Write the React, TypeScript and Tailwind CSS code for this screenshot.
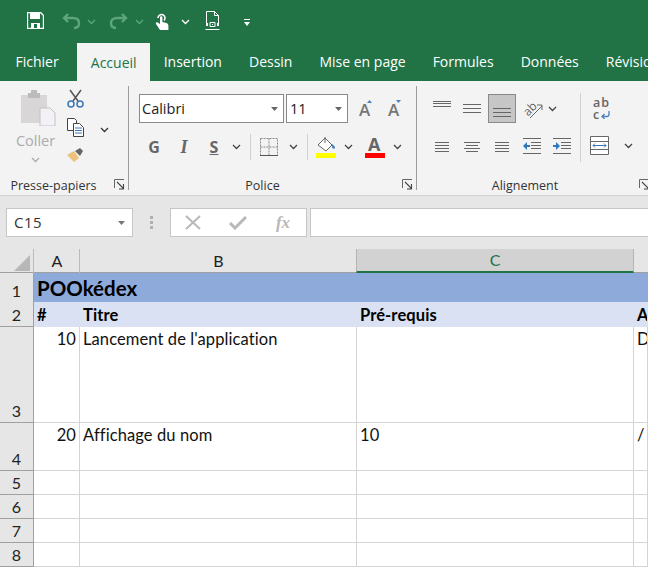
import type { ReactNode } from "react";

const TABS = ["Fichier", "Accueil", "Insertion", "Dessin", "Mise en page", "Formules", "Données", "Révision"];

function Chevron({ color = "#444", className = "" }: { color?: string; className?: string }) {
  return (
    <svg width="9" height="6" viewBox="0 0 9 6" className={className}>
      <path d="M1 1l3.5 3.5L8 1" fill="none" stroke={color} strokeWidth="1.3" />
    </svg>
  );
}

function Launcher() {
  return (
    <svg width="11" height="11" viewBox="0 0 11 11">
      <path d="M.5 9V.5H10" fill="none" stroke="#666" />
      <path d="M3 3l6 6M9.5 5v5H5" fill="none" stroke="#444" strokeWidth="1.1" />
    </svg>
  );
}

function Slot({ w, children, className = "" }: { w: string; children?: ReactNode; className?: string }) {
  return <div className={`flex items-center justify-center shrink-0 ${w} ${className}`}>{children}</div>;
}

function Lines({ rows, w = 18 }: { rows: [number, number][]; w?: number }) {
  // rows are [inset, y] pairs, drawn as grey text lines
  return (
    <svg width={w} height="18" viewBox={`0 0 ${w} 18`}>
      {rows.map(([inset, y]) => (
        <path key={y} d={`M${inset} ${y + 0.5}H${w - inset}`} stroke="#666" />
      ))}
    </svg>
  );
}

function QuickAccess() {
  return (
    <div className="flex items-center h-[43px] pl-[27px]">
      <svg width="17" height="17" viewBox="0 0 17 17" className="mb-[3px]">
        <path d="M.5.5h13l3 3v13H.5z" fill="none" stroke="#fff" strokeWidth="1.4" />
        <path d="M3 1h10v6H3zM4 11h9v5H4z" fill="#fff" />
        <path d="M7 12h3v4H7z" fill="#217346" />
      </svg>
      <svg width="19" height="17" viewBox="0 0 19 17" className="ml-[18px] mb-[1px]">
        <path d="M6 1L2 5l4 4M2 5h9c4 0 6 2 6 5s-2 5-5 5" fill="none" stroke="#5da57c" strokeWidth="2.4" />
      </svg>
      <Chevron color="#5da57c" className="ml-[6px]" />
      <svg width="19" height="17" viewBox="0 0 19 17" className="ml-[13px] mb-[1px]">
        <path d="M13 1l4 4-4 4M17 5H8c-4 0-6 2-6 5s2 5 5 5" fill="none" stroke="#5da57c" strokeWidth="2.4" />
      </svg>
      <Chevron color="#5da57c" className="ml-[7px]" />
      <svg width="14" height="18" viewBox="0 0 14 18" className="ml-[11px]">
        <path d="M3 5a3.5 3.5 0 1 1 6 2.5" fill="none" stroke="#fff" strokeWidth="1.6" />
        <path d="M5 4.5c0-1.600 2.400-1.600 2.400 0V9l4 1c1.500.5 2 1.500 2 3v4H5L1 11c-.7-1.300.8-2.300 2-1.300L5 11z" fill="#fff" />
      </svg>
      <Chevron color="#fff" className="ml-[12px]" />
      <svg width="15" height="19" viewBox="0 0 15 19" className="ml-[15px] mb-[2px]">
        <path d="M1.500 13V.5h8l4 4V13M9.500.5v4h4M.5 18.500h14" fill="none" stroke="#fff" />
        <path d="M5 11.500h5v4H5z" fill="none" stroke="#fff" />
        <path d="M1 12h2v3H1zM12 12h2v3h-2zM7 13h1v1H7z" fill="#fff" />
      </svg>
      <svg width="8" height="8" viewBox="0 0 8 8" className="ml-[23px] mt-[3px]">
        <path d="M1 .5h6" stroke="#fff" />
        <path d="M1 3h6L4 7z" fill="#fff" />
      </svg>
    </div>
  );
}

function TabBar() {
  return (
    <div className="flex h-[38px] pl-[2px] pb-[1px] text-[14px] text-white overflow-hidden">
      {TABS.map((t) => (
        <div
          key={t}
          className={`flex items-center justify-center px-[13.5px] shrink-0 whitespace-nowrap ${
            t === "Accueil" ? "bg-[#f3f3f3] text-[#217346] w-[73px] ml-[5px] mb-[-1px]" : ""
          }`}
        >
          {t}
        </div>
      ))}
    </div>
  );
}

function GroupLabel({ w, children }: { w: string; children: ReactNode }) {
  return <div className={`absolute bottom-[-4px] left-0 ${w} text-center text-[12.5px] leading-[16px] text-[#333]`}>{children}</div>;
}

function ClipboardGroup() {
  return (
    <div className="relative w-[129px] shrink-0 border-r border-[#9c9c9c] my-[5px] h-[104px]">
      <div className="flex pt-[3px]">
        <div className="flex flex-col items-center w-[66px] pl-[5px]">
          <svg width="36" height="37" viewBox="0 0 36 37" className="ml-[5px]">
            <path d="M1 6h26v28H1z" fill="#d8d6d7" />
            <path d="M8 4h12v5H8z" fill="#bdbbbc" />
            <path d="M11 1h6v4h-6z" fill="#bdbbbc" />
            <path d="M20 19h10l5 5v13H20z" fill="#f4f1f6" stroke="#c4c2c4" />
          </svg>
          <span className="text-[#ababab] text-[14.5px] mt-[5px] leading-[20px]">Coller</span>
          <Chevron color="#ababab" className="mt-[6px]" />
        </div>
        <div className="flex flex-col items-center w-[18px] gap-[10px]">
          <svg width="17" height="19" viewBox="0 0 17 19">
            <path d="M3 1l8 11M14 1L6 12" stroke="#555" strokeWidth="1.500" />
            <circle cx="4" cy="15" r="3" fill="none" stroke="#3d77b8" strokeWidth="1.500" />
            <circle cx="13" cy="15" r="3" fill="none" stroke="#3d77b8" strokeWidth="1.500" />
          </svg>
          <svg width="17" height="19" viewBox="0 0 17 19">
            <path d="M.5.5h7l2 2v10h-9z" fill="#fff" stroke="#444" />
            <path d="M6.500 5.500h6l4 4v9h-10z" fill="#fff" stroke="#444" />
            <path d="M8 10h7M8 12.500h7M8 15h7" stroke="#3d77b8" />
          </svg>
          <svg width="18" height="16" viewBox="0 0 18 16">
            <path d="M1 8l7-4 5 7-5 4z" fill="#eec27d" />
            <path d="M9 4l5-3 3 3-3 5z" fill="#666" />
          </svg>
        </div>
        <Chevron color="#333" className="ml-[16px] mt-[38px]" />
      </div>
      <GroupLabel w="w-[107px]">Presse-papiers</GroupLabel>
      <div className="absolute bottom-0 right-[3px]"><Launcher /></div>
    </div>
  );
}

function ComboBox({ w, text, pad }: { w: string; text: string; pad: string }) {
  return (
    <div className={`${w} h-[29px] bg-white border border-[#8a8a8a] flex items-center justify-between pr-[4px] ${pad}`}>
      <span className="text-[14.5px] leading-[20px] text-[#222]">{text}</span>
      <svg width="7" height="4" viewBox="0 0 7 4" className="mr-[1px]"><path d="M0 0h7L3.500 4z" fill="#666" /></svg>
    </div>
  );
}

function GrowFont({ up }: { up: boolean }) {
  return (
    <svg width="16" height="24" viewBox="0 0 16 24">
      <text x="1" y="19" fontSize="17" fontWeight="600" fill="#777" fontFamily="'Open Sans', sans-serif">A</text>
      <path d={up ? "M9 6l2.500-3L14 6z" : "M9 3h5l-2.500 3z"} fill="#4a80bb" />
    </svg>
  );
}

function FontGroup() {
  return (
    <div className="relative w-[288px] shrink-0 border-r border-[#9c9c9c] my-[5px] h-[104px]">
      <div className="flex items-center pt-[8px] pl-[10px]">
        <ComboBox w="w-[145px]" text="Calibri" pad="pl-[2px]" />
        <ComboBox w="w-[62px] ml-[2px]" text="11" pad="pl-[3px]" />
        <Slot w="w-[16px] ml-[10px]"><GrowFont up /></Slot>
        <Slot w="w-[16px] ml-[13px]"><GrowFont up={false} /></Slot>
      </div>
      <div className="flex items-center h-[26px] mt-[11px] pl-[10px]">
        <Slot w="w-[30px]" className="font-bold text-[16px] text-[#666]">G</Slot>
        <Slot w="w-[30px]" className="font-bold italic font-['Liberation_Serif'] text-[18px] text-[#666]">I</Slot>
        <Slot w="w-[30px]" className="font-bold underline text-[16px] text-[#666]">S</Slot>
        <Slot w="w-[14px]"><Chevron /></Slot>
        <div className="w-px h-[26px] bg-[#d0d0d0] ml-[7px]" />
        <Slot w="w-[20px] ml-[8px]">
          <svg width="18" height="18" viewBox="0 0 18 18">
            <path d="M.5.500h17v17H.5zM9 .5v17M.5 9h17" fill="none" stroke="#888" strokeDasharray="2 1" />
            <path d="M0 17.500h18" stroke="#555" />
          </svg>
        </Slot>
        <Slot w="w-[14px] ml-[7px]"><Chevron /></Slot>
        <div className="w-px h-[26px] bg-[#d0d0d0] ml-[7px]" />
        <Slot w="w-[21px] ml-[8px]">
          <svg width="21" height="22" viewBox="0 0 21 22">
            <path d="M2 9l7-7 7 7-6 6z" fill="#fff" stroke="#666" />
            <path d="M9 1v6" stroke="#666" />
            <path d="M16 8c2 1 3 3 3 4s-3 1-3-1z" fill="#4a80bb" />
            <path d="M0 17h20v5H0z" fill="#ffff00" />
          </svg>
        </Slot>
        <Slot w="w-[14px] ml-[4px]"><Chevron /></Slot>
        <Slot w="w-[20px] ml-[10px]">
          <svg width="20" height="24" viewBox="0 0 20 24">
            <text x="3" y="16" fontSize="18" fontWeight="700" fill="#666" fontFamily="'Open Sans', sans-serif">A</text>
            <path d="M0 18h20v5H0z" fill="#ff0000" />
          </svg>
        </Slot>
        <Slot w="w-[14px] ml-[5px]"><Chevron /></Slot>
      </div>
      <GroupLabel w="w-[267px]">Police</GroupLabel>
      <div className="absolute bottom-0 right-[3px]"><Launcher /></div>
    </div>
  );
}

function IndentIcon({ arrow }: { arrow: string }) {
  return (
    <svg width="18" height="16" viewBox="0 0 18 16">
      <path d="M0 .5h18M8 4.500h10M8 7.500h10M8 10.500h10M0 15.500h18" stroke="#666" />
      <path d={arrow} fill="#2f78bb" />
    </svg>
  );
}

function AlignmentGroup() {
  return (
    <div className="relative flex flex-1 my-[5px] h-[104px]">
      <div className="w-[159px] shrink-0 pl-[10px] pt-[8px]">
        <div className="flex items-center h-[29px]">
          <Slot w="w-[30px]"><Lines rows={[[0, 1], [0, 3], [0, 6]]} /></Slot>
          <Slot w="w-[30px]"><Lines rows={[[0, 4], [0, 8], [0, 12]]} /></Slot>
          <Slot w="w-[28px] h-[29px] ml-[1px] bg-[#c6c6c6] border border-[#8a8a8a]"><Lines rows={[[0, 8], [0, 12], [0, 16]]} /></Slot>
          <Slot w="w-[28px] ml-[3px]">
            <svg width="22" height="22" viewBox="0 0 22 22" className="overflow-visible">
              <text x="1" y="15" fontSize="12" fill="#666" transform="rotate(-45 8 11)" fontFamily="'Open Sans', sans-serif">ab</text>
              <path d="M8 20L20 8M15 7h5v5" fill="none" stroke="#666" />
            </svg>
          </Slot>
          <Slot w="w-[14px] ml-[-2px]"><Chevron /></Slot>
        </div>
        <div className="flex items-center h-[24px] mt-[11px]">
          <Slot w="w-[30px]"><Lines rows={[[0, 5], [0, 8], [0, 11], [0, 14]]} w={14} /></Slot>
          <Slot w="w-[30px]"><Lines rows={[[0, 5], [2, 8], [0, 11], [2, 14]]} w={16} /></Slot>
          <Slot w="w-[30px]"><Lines rows={[[0, 5], [0, 8], [0, 11], [0, 14]]} w={14} /></Slot>
          <Slot w="w-[30px]"><IndentIcon arrow="M0 8l4-4v3h3v2H4v3z" /></Slot>
          <Slot w="w-[30px]"><IndentIcon arrow="M7 8L3 4v3H0v2h3v3z" /></Slot>
        </div>
      </div>
      <div className="w-px h-[69px] bg-[#d0d0d0] ml-[4px] mt-[7px]" />
      <div className="pt-[8px]">
        <div className="flex flex-col h-[29px] ml-[12px] text-[12.5px] leading-[12px] font-semibold text-[#666] tracking-[1px] pt-[3px]">
          <span>ab</span>
          <div className="flex items-center">
            <span>c</span>
            <svg width="9" height="8" viewBox="0 0 9 8" className="ml-[1px]">
              <path d="M8 0v3c0 2-1 2.500-2 2.500H1M3.500 3L1 5.500 3.500 8" fill="none" stroke="#4a80bb" strokeWidth="1.300" />
            </svg>
          </div>
        </div>
        <div className="flex items-center h-[24px] mt-[11px] ml-[9px]">
          <Slot w="w-[20px]">
            <svg width="20" height="20" viewBox="0 0 20 20">
              <path d="M.5.500h18v18H.5zM.5 5.500h18M.5 13.500h18" fill="#fff" stroke="#666" />
              <path d="M3 9.500h13M5 7.500l-2 2 2 2M14 7.500l2 2-2 2" fill="none" stroke="#3d77b8" />
            </svg>
          </Slot>
          <Slot w="w-[14px] ml-[11px]"><Chevron /></Slot>
        </div>
      </div>
      <GroupLabel w="w-[216px]">Alignement</GroupLabel>
      <div className="absolute bottom-0 left-[222px]"><Launcher /></div>
    </div>
  );
}

function FormulaBar() {
  return (
    <div className="flex items-start h-[54px] bg-[#e6e6e6] border-t border-[#d2d2d2] pl-[6px] pt-[12px]">
      <div className="w-[127px] h-[29px] bg-white border border-[#c6c6c6] flex items-center justify-between pl-[7px] pr-[7px] text-[15px] tracking-[0.5px] text-[#333]">
        C15
        <svg width="7" height="4" viewBox="0 0 7 4"><path d="M0 0h7L3.500 4z" fill="#777" /></svg>
      </div>
      <div className="w-[37px] h-[29px] flex flex-col items-center justify-center gap-[2px]">
        <span className="w-[3px] h-[3px] bg-[#b0b0b0]" />
        <span className="w-[3px] h-[3px] bg-[#b0b0b0]" />
        <span className="w-[3px] h-[3px] bg-[#b0b0b0]" />
      </div>
      <div className="w-[137px] h-[29px] bg-white border border-[#c6c6c6] flex items-center">
        <Slot w="w-[44px]">
          <svg width="16" height="15" viewBox="0 0 16 15"><path d="M1 1l14 13M15 1L1 14" stroke="#b8b8b8" strokeWidth="2" /></svg>
        </Slot>
        <Slot w="w-[45px]">
          <svg width="18" height="15" viewBox="0 0 18 15"><path d="M1 8l5 5L17 2" fill="none" stroke="#b8b8b8" strokeWidth="3" /></svg>
        </Slot>
        <Slot w="w-[46px]" className="text-[#b8b8b8] italic font-bold font-['Liberation_Serif'] text-[17px]">fx</Slot>
      </div>
      <div className="flex-1 h-[29px] ml-[3px] bg-white border-y border-l border-[#c6c6c6]" />
    </div>
  );
}

const COLS = "grid grid-cols-[34px_46px_277px_277px_1fr]";
const ROW_HEAD = "flex items-end justify-center bg-[#e6e6e6] border-r border-b border-[#a0a0a0] text-[16px] text-[#222] leading-[22px]";
const CELL = "border-r border-b border-[#d4d4d4] px-[3px] text-[16.5px] tracking-[0.1px] leading-[24px] text-[#111] whitespace-nowrap overflow-hidden";

function Row({ n, h, cells, bg }: { n: number; h: string; cells: ReactNode[]; bg?: string }) {
  return (
    <div className={`${COLS} ${h}`}>
      <div className={ROW_HEAD}>{n}</div>
      {cells.map((c, i) => (
        <div key={i} className={`${CELL} ${bg ?? ""} ${i === 0 && n > 2 ? "text-right" : ""}`}>{c}</div>
      ))}
    </div>
  );
}

function Sheet() {
  return (
    <div className="font-['Lato',sans-serif]">
      <div className={`${COLS} h-[24px] bg-[#e6e6e6] border-b border-[#a0a0a0] text-[16px] text-[#222]`}>
        <div className="flex items-end justify-end pr-[3px] pb-[2px] border-r border-[#bbb]">
          <svg width="16" height="16" viewBox="0 0 16 16"><path d="M16 0v16H0z" fill="#b7b7b7" /></svg>
        </div>
        <div className="flex items-center justify-center border-r border-[#bbb] pl-[1px]">A</div>
        <div className="flex items-center justify-center">B</div>
        <div className="flex items-center justify-center bg-[#d2d2d2] border-b-2 border-b-[#217346] border-x border-x-[#b4b4b4] text-[#217346] h-[24px] ml-[-1px]">C</div>
        <div />
      </div>
      <div className={`${COLS} h-[29px]`}>
        <div className={ROW_HEAD}>1</div>
        <div className="col-span-4 bg-[#8eaadb] px-[3px] font-bold text-[20.5px] leading-[30px] text-black">POOkédex</div>
      </div>
      <Row
        n={2}
        h="h-[25px]"
        bg="bg-[#d9e1f2] !border-transparent font-bold !text-black pt-px"
        cells={["#", "Titre", "Pré-requis", "A"]}
      />
      <Row n={3} h="h-[96px]" cells={[10, "Lancement de l'application", "", "D"]} />
      <Row n={4} h="h-[48px]" cells={[20, "Affichage du nom", 10, "/"]} />
      {[5, 6, 7, 8].map((n) => (
        <Row key={n} n={n} h="h-[24px]" cells={["", "", "", ""]} />
      ))}
    </div>
  );
}

export default function App() {
  return (
    <div className="w-[648px] h-[567px] overflow-hidden bg-white font-['Open_Sans',sans-serif]">
      <div className="bg-[#217346]">
        <QuickAccess />
        <TabBar />
      </div>
      <div className="flex h-[114px] bg-[#f3f3f3]">
        <ClipboardGroup />
        <FontGroup />
        <AlignmentGroup />
      </div>
      <FormulaBar />
      <Sheet />
    </div>
  );
}
